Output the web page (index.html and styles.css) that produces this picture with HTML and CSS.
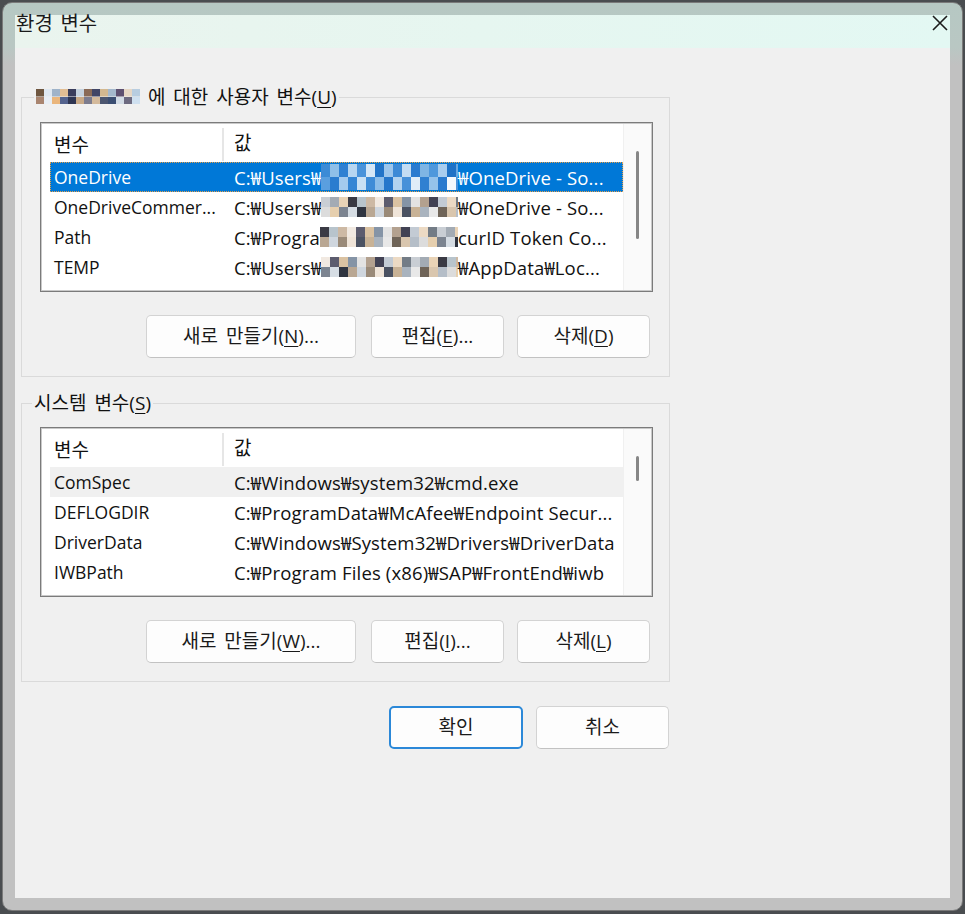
FILE: index.html
```html
<!DOCTYPE html>
<html lang="ko">
<head>
<meta charset="utf-8">
<title>환경 변수</title>
<link rel="stylesheet" href="styles.css">
</head>
<body>
<div class="window">
  <div class="client">
    <div class="titlebar">
      <span class="title">환경 변수</span>
      <svg class="close" width="16" height="16" viewBox="0 0 16 16"><path d="M1 1 L15 15 M15 1 L1 15" stroke="#1c1c1c" stroke-width="1.6" fill="none"/></svg>
    </div>
    <div class="content">
      <fieldset class="group g1">
        <legend><span class="mz mz-legend"></span> 에 대한 사용자 변수(<u>U</u>)</legend>
        <div class="listview">
          <div class="lv-body">
            <div class="lv-head"><div class="hc hc1">변수</div><div class="hc hc2">값</div></div>
            <div class="row sel"><div class="c1">OneDrive</div><div class="c2"><span class="masked"><span class="pre">C:₩Users₩</span><span class="mz mz-sel"></span></span><span>₩OneDrive - So...</span></div></div>
            <div class="row"><div class="c1">OneDriveCommer...</div><div class="c2"><span class="masked"><span class="pre">C:₩Users₩</span><span class="mz mz-row"></span></span><span>₩OneDrive - So...</span></div></div>
            <div class="row"><div class="c1">Path</div><div class="c2"><span class="masked"><span class="pre">C:₩Progra</span><span class="mz mz-row alt"></span></span><span>curID Token Co...</span></div></div>
            <div class="row"><div class="c1">TEMP</div><div class="c2"><span class="masked"><span class="pre">C:₩Users₩</span><span class="mz mz-row alt2"></span></span><span>₩AppData₩Loc...</span></div></div>
          </div>
          <div class="vscroll"><div class="thumb" style="height:88px"></div></div>
        </div>
        <div class="btnrow">
          <button class="btn b-new">새로 만들기(<u>N</u>)...</button>
          <button class="btn b-edit">편집(<u>E</u>)...</button>
          <button class="btn b-del">삭제(<u>D</u>)</button>
        </div>
      </fieldset>

      <fieldset class="group g2">
        <legend>시스템 변수(<u>S</u>)</legend>
        <div class="listview">
          <div class="lv-body">
            <div class="lv-head"><div class="hc hc1">변수</div><div class="hc hc2">값</div></div>
            <div class="row hot"><div class="c1">ComSpec</div><div class="c2">C:₩Windows₩system32₩cmd.exe</div></div>
            <div class="row"><div class="c1">DEFLOGDIR</div><div class="c2">C:₩ProgramData₩McAfee₩Endpoint Secur...</div></div>
            <div class="row"><div class="c1">DriverData</div><div class="c2">C:₩Windows₩System32₩Drivers₩DriverData</div></div>
            <div class="row"><div class="c1">IWBPath</div><div class="c2">C:₩Program Files (x86)₩SAP₩FrontEnd₩iwb</div></div>
          </div>
          <div class="vscroll"><div class="thumb" style="height:25px"></div></div>
        </div>
        <div class="btnrow">
          <button class="btn b-new">새로 만들기(<u>W</u>)...</button>
          <button class="btn b-edit">편집(<u>I</u>)...</button>
          <button class="btn b-del">삭제(<u>L</u>)</button>
        </div>
      </fieldset>

      <div class="dlgbtns">
        <button class="btn b-ok">확인</button>
        <button class="btn b-cancel">취소</button>
      </div>
    </div>
  </div>
</div>
</body>
</html>
```

FILE: styles.css
```css
* { box-sizing: border-box; }
html, body { margin: 0; padding: 0; }
body {
  width: 965px;
  height: 914px;
  overflow: hidden;
  background: #4a4d50;
  font-family: "Open Sans", "Noto Sans CJK KR", sans-serif;
  font-size: 17.5px;
  color: #111;
}
.window {
  margin: 2px 2px 0 2px;
  width: 961px;
  height: 909px;
  border: 1px solid #7a7a7a;
  border-radius: 10px;
  padding: 12px;
  background: linear-gradient(to bottom, #b6c8c3 0, #b9c7c3 44px, #c1c1c1 62px, #c1c1c1 100%);
}
.client {
  width: 935px;
  height: 883px;
  background: #f0f0f0;
  display: flex;
  flex-direction: column;
}
.titlebar {
  height: 33px;
  flex: none;
  display: flex;
  justify-content: space-between;
  align-items: flex-start;
  background: linear-gradient(to right, #eaf4ee 0%, #e6f6f0 50%, #e3f8f3 100%);
}
.title {
  font-family: "Noto Sans CJK KR", sans-serif;
  font-size: 20px;
  line-height: 20px;
  margin-top: -2px;
  padding-left: 1px;
  word-spacing: 2px;
  color: #1a1a1a;
}
.close { margin: 0 2px 0 0; }

.content {
  padding-left: 6px;
  display: flex;
  flex-direction: column;
}
.group {
  width: 649px;
  margin: 0;
  padding: 0;
  border: 1px solid #dadada;
  min-inline-size: 0;
}
.g1 { margin-top: 37px; }
.g2 { margin-top: 14px; }
.group legend {
  font-size: 19px;
  line-height: 24px;
  padding: 0 2px;
  margin-left: 12px;
  word-spacing: 3px;
  color: #111;
}
.g2 legend { margin-left: 10px; }
u { text-decoration-thickness: 1px; text-underline-offset: 3px; }

.mz {
  display: inline-block;
  vertical-align: middle;
  background-repeat: repeat-x;
  background-size: 144px 50%, 144px 50%;
  background-position: 0 0, 0 100%;
}
.mz-legend {
  width: 104px;
  height: 15px;
  margin-top: -4px;
  background-image:
    linear-gradient(90deg, #6e5640 0 8px, #dfe8f1 8px 16px, #9fb3c9 16px 24px, #e2be94 24px 32px, #3a3d5c 32px 40px, #c6d2de 40px 48px, #8a6a56 48px 56px, #414566 56px 64px, #d3b890 64px 72px, #a4b8cc 72px 80px, #5e5070 80px 88px, #e6d6c4 88px 96px, #b8cde0 96px 104px, #888 104px 144px),
    linear-gradient(90deg, #a98570 0 8px, #e8eef5 8px 16px, #eab67c 16px 24px, #54638e 24px 32px, #2e3552 32px 40px, #c9aa88 40px 48px, #7c7c8e 48px 56px, #d4ba9c 56px 64px, #4c5670 64px 72px, #3b4e72 72px 80px, #d3dce6 80px 88px, #6d6a80 88px 96px, #cfe0f0 96px 104px, #888 104px 144px);
}
.mz-sel {
  flex: 1;
  height: 26px;
  background-image:
    linear-gradient(90deg, #3c8bd6 0 9px, #8fbfe8 9px 18px, #2f80d2 18px 27px, #b7d6f1 27px 36px, #4a93da 36px 45px, #d6e7f6 45px 54px, #2274c8 54px 63px, #9cc6ec 63px 72px, #3d8ad6 72px 81px, #c4ddf3 81px 90px, #2a7bcf 90px 99px, #7fb5e4 99px 108px, #4f98dc 108px 117px, #a9cdee 117px 126px, #1f72c6 126px 135px, #6aa8e0 135px 144px),
    linear-gradient(90deg, #5a9fdf 0 9px, #2b7ccf 9px 18px, #a4caee 18px 27px, #3585d4 27px 36px, #c9e0f4 36px 45px, #3f8cd7 45px 54px, #8cbde9 54px 63px, #2677cb 63px 72px, #b2d3f0 72px 81px, #4791d9 81px 90px, #e0edf8 90px 99px, #3080d1 99px 108px, #95c2ea 108px 117px, #2a7ace 117px 126px, #f4f8fc 126px 135px, #4a93da 135px 144px);
}
.mz-row {
  flex: 1;
  height: 20px;
  background-image:
    linear-gradient(90deg, #c9ced4 0 9px, #a3abb4 9px 18px, #e9d3b6 18px 27px, #3a3a44 27px 36px, #b8c4cc 36px 45px, #cdb9a4 45px 54px, #f1e9e1 54px 63px, #5c5c6e 63px 72px, #dac2a2 72px 81px, #8594a6 81px 90px, #e3e3e3 90px 99px, #b3a18f 99px 108px, #424254 108px 117px, #c3cbd4 117px 126px, #ecdac4 126px 135px, #737c86 135px 144px),
    linear-gradient(90deg, #dcdcdc 0 9px, #e6cfae 9px 18px, #7c8490 18px 27px, #d6dde4 27px 36px, #2f3440 36px 45px, #b9a793 45px 54px, #cfd6de 54px 63px, #9a8a78 63px 72px, #efe4d8 72px 81px, #4b5262 81px 90px, #c8b296 90px 99px, #a9b3be 99px 108px, #e8e8e8 108px 117px, #6f6458 117px 126px, #d9c6ae 126px 135px, #b5bec8 135px 144px);
}
.mz-row.alt { background-position: -27px 0, -45px 100%; }
.mz-row.alt2 { background-position: -54px 0, -18px 100%; }

.listview {
  margin: 13px 0 0 18px;
  width: 613px;
  height: 170px;
  border: 1px solid #7b7b7b;
  box-shadow: inset 0 0 0 1px #c9c9c9;
  background: #fff;
  display: flex;
  padding: 1px;
}
.g2 .listview { margin-top: 12px; }
.lv-body {
  flex: 1;
  padding-left: 8px;
  overflow: hidden;
}
.lv-head {
  height: 38px;
  display: flex;
  align-items: center;
  font-size: 19px;
}
.hc { line-height: 24px; }
.hc1 {
  width: 174px;
  padding-left: 4px;
  border-right: 2px solid #e6e6e6;
  height: 33px;
  display: flex;
  align-items: center;
  margin-top: 3px;
}
.hc2 { padding-left: 10px; }
.row {
  height: 30px;
  display: flex;
  align-items: center;
  white-space: nowrap;
  color: #111;
}
.row.sel {
  background: #0078d7;
  color: #fff;
  outline: 1px dotted #e6a04a;
  outline-offset: -1px;
}
.row.hot { background: #f0f0f0; }
.c1 { width: 180px; padding-left: 4px; overflow: hidden; }
.c2 {
  padding-left: 4px;
  display: flex;
  align-items: center;
  overflow: hidden;
  font-size: 18.5px;
  letter-spacing: 0.15px;
}
.masked { width: 224px; display: flex; align-items: center; flex: none; }
.pre { flex: none; }
.vscroll {
  width: 28px;
  flex: none;
  background: #fafafa;
  border-left: 1px solid #f0f0f0;
  padding: 27px 0 0 12px;
}
.thumb {
  width: 3px;
  background: #868686;
  border-radius: 2px;
}

.btn {
  font: inherit;
  font-size: 19px;
  word-spacing: 3px;
  color: #1a1a1a;
  height: 43px;
  background: #fdfdfd;
  border: 1px solid #d3d3d3;
  border-bottom-color: #c2c2c2;
  border-radius: 5px;
  padding: 0;
  line-height: 1;
}
.btnrow {
  display: flex;
  justify-content: flex-end;
  margin: 23px 19px 18px 0;
}
.b-new { width: 210px; margin-right: 15px; }
.b-edit { width: 133px; margin-right: 13px; }
.b-del { width: 133px; }
.dlgbtns {
  width: 649px;
  display: flex;
  justify-content: flex-end;
  padding-right: 1px;
  margin-top: 24px;
}
.b-ok {
  width: 134px;
  margin-right: 13px;
  border: 2px solid #2b88d8;
}
.b-cancel { width: 133px; }
```
